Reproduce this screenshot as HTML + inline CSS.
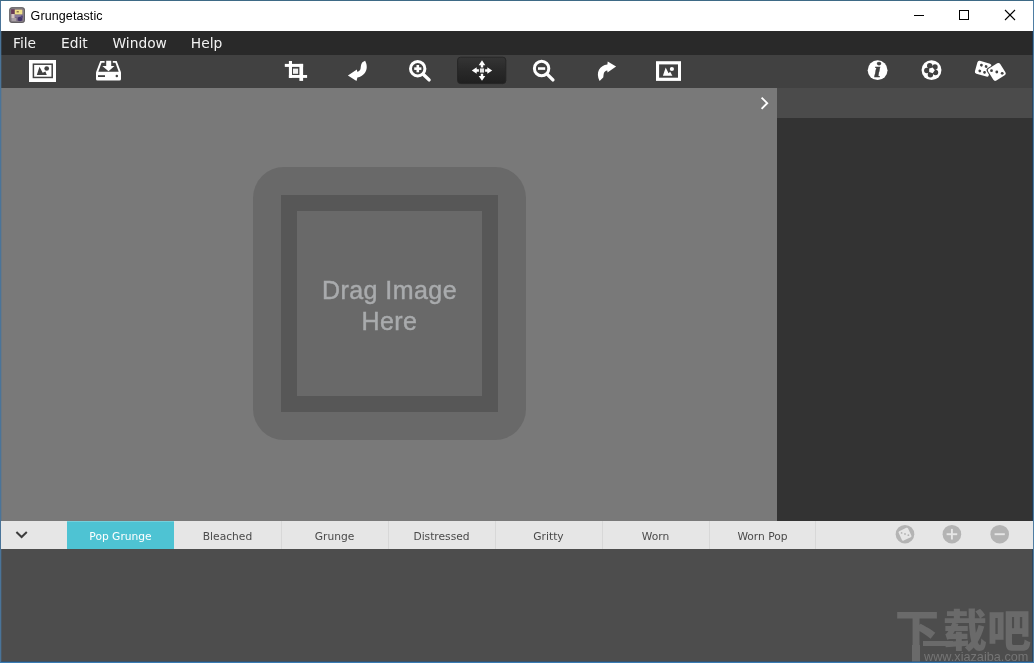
<!DOCTYPE html>
<html lang="en">
<head>
<meta charset="utf-8">
<title>Grungetastic</title>
<style>
html,body{margin:0;padding:0;}
body{width:1034px;height:663px;overflow:hidden;background:#3a7cb4;font-family:"Liberation Sans",sans-serif;position:relative;}
.abs{position:absolute;}
#win{will-change:transform;position:absolute;left:1px;top:1px;width:1032px;height:661px;background:#4d4d4d;overflow:hidden;}
/* coordinates inside #win are page coords minus 1 */
#titlebar{left:0;top:0;width:1032px;height:30px;background:#ffffff;}
#title{left:29.6px;top:7px;font-size:12.5px;line-height:16px;color:#000;letter-spacing:0.1px;white-space:nowrap;}
#menubar{left:0;top:30px;width:1032px;height:24px;background:#292929;}
.menu{top:3px;font-family:"DejaVu Sans","Liberation Sans",sans-serif;font-size:13.8px;line-height:18px;color:#f2f2f2;white-space:nowrap;}
#toolbar{left:0;top:54px;width:1032px;height:33px;background:#414141;}
#canvas{left:0;top:87px;width:776px;height:433px;background:#797979;}
#side{left:776px;top:87px;width:256px;height:433px;background:#333333;}
#sidehead{left:0;top:0;width:256px;height:30px;background:#4b4b4b;}
#strip{left:0;top:520px;width:1032px;height:28px;background:#e6e6e6;}
.tab{top:0;height:28px;width:107px;text-align:center;font-family:"DejaVu Sans","Liberation Sans",sans-serif;font-size:10.7px;line-height:32px;color:#4a4a4a;}
.sep{top:0;width:1px;height:28px;background:#d8d8d8;}
.tab.on{background:#4ec3d3;color:#ffffff;box-shadow:inset 0 1px 0 rgba(255,255,255,0.22);}
#bottom{left:0;top:548px;width:1032px;height:113px;background:#4d4d4d;}
#drop1{left:252.3px;top:79.2px;width:272.4px;height:272.4px;border-radius:31px;background:#696969;}
#drop2{left:27.4px;top:27.4px;width:217.5px;height:217px;background:#575757;}
#drop3{left:16.2px;top:16.1px;width:185.2px;height:185.2px;background:#696969;}
#droptext{left:0;top:64.5px;width:185.2px;text-align:center;font-size:25px;line-height:30.5px;color:#a9abad;letter-spacing:0.45px;-webkit-text-stroke:0.45px #a9abad;}
#wm{left:894px;top:60.5px;font-family:"Liberation Sans","Noto Sans CJK SC",sans-serif;font-weight:900;font-size:44px;line-height:44px;color:#6a6a6a;white-space:nowrap;letter-spacing:0px;}
#wmstem{left:911.2px;top:96px;width:7.4px;height:18px;background:#6a6a6a;}
#wmbar{left:922.4px;top:92px;width:30px;height:4.8px;background:#6a6a6a;}
#wmurl{left:923px;top:101.2px;font-size:12.7px;line-height:15px;color:#757575;white-space:nowrap;}
svg{position:absolute;left:0;top:0;overflow:visible;}
</style>
</head>
<body>
<div id="win">
  <div id="titlebar" class="abs">
    <div id="title" class="abs">Grungetastic</div>
  </div>
  <div id="menubar" class="abs">
    <div class="menu abs" style="left:12px">File</div>
    <div class="menu abs" style="left:60px">Edit</div>
    <div class="menu abs" style="left:111.5px">Window</div>
    <div class="menu abs" style="left:189.8px">Help</div>
  </div>
  <div id="toolbar" class="abs"></div>
  <div id="canvas" class="abs">
    <div id="drop1" class="abs"><div id="drop2" class="abs"><div id="drop3" class="abs">
      <div id="droptext" class="abs">Drag Image<br>Here</div>
    </div></div></div>
  </div>
  <div id="side" class="abs"><div id="sidehead" class="abs"></div></div>
  <div id="strip" class="abs">
    <div class="tab on abs" style="left:66px">Pop Grunge</div>
    <div class="tab abs" style="left:173px">Bleached</div>
    <div class="tab abs" style="left:280px">Grunge</div>
    <div class="tab abs" style="left:387px">Distressed</div>
    <div class="tab abs" style="left:494px">Gritty</div>
    <div class="tab abs" style="left:601px">Worn</div>
    <div class="tab abs" style="left:708px">Worn Pop</div>
    <div class="sep abs" style="left:280px"></div>
    <div class="sep abs" style="left:387px"></div>
    <div class="sep abs" style="left:494px"></div>
    <div class="sep abs" style="left:601px"></div>
    <div class="sep abs" style="left:708px"></div>
    <div class="sep abs" style="left:814px"></div>
  </div>
  <div id="bottom" class="abs">
    <div id="wm" class="abs"><span style="letter-spacing:4px">下</span>载吧</div>
    <div id="wmstem" class="abs"></div>
    <div id="wmbar" class="abs"></div>
    <div id="wmurl" class="abs">www.xiazaiba.com</div>
  </div>
</div>
<div class="abs" style="left:0;top:0;width:1034px;height:1px;background:#3e6a86"></div>
<div class="abs" style="left:0;top:1px;width:1px;height:662px;background:#4a7499"></div>
<div class="abs" style="left:1033px;top:1px;width:1px;height:662px;background:#4e7da3"></div>
<div class="abs" style="left:0;top:662px;width:1034px;height:1px;background:#3a7cb4"></div>
<div class="abs" style="left:1px;top:31px;width:1px;height:490px;background:rgba(74,116,153,0.3)"></div>
<div class="abs" style="left:1px;top:549px;width:1px;height:113px;background:rgba(74,116,153,0.3)"></div>
<div class="abs" style="left:1032px;top:31px;width:1px;height:490px;background:rgba(20,60,100,0.55)"></div>
<div class="abs" style="left:1032px;top:549px;width:1px;height:113px;background:rgba(20,60,100,0.55)"></div>
<div class="abs" style="left:1px;top:661px;width:1032px;height:1px;background:rgba(40,85,130,0.55)"></div>
<!-- ICONS: page coordinates -->
<svg id="icons" width="1034" height="663" viewBox="0 0 1034 663">
<!-- app icon -->
<defs><filter id="soft" x="-10%" y="-10%" width="120%" height="120%"><feGaussianBlur stdDeviation="0.55"/></filter></defs>
<g>
  <rect x="9.3" y="7.3" width="15.6" height="15.6" rx="2.6" fill="#8d888b"/>
  <rect x="9.8" y="7.8" width="14.6" height="14.6" rx="2.2" fill="none" stroke="#5f5c5f" stroke-width="1"/>
  <g filter="url(#soft)">
    <rect x="11" y="9" width="12.2" height="12.2" fill="#7a6a80"/>
    <rect x="11.2" y="9.4" width="3.6" height="4.6" fill="#6a3a55"/>
    <rect x="14.8" y="9.6" width="7.6" height="4.8" fill="#efe08a"/>
    <rect x="16.6" y="11.2" width="2.2" height="1.2" fill="#7a5a40"/>
    <rect x="11.4" y="14" width="3.2" height="4" fill="#d4c4c0"/>
    <rect x="11.4" y="18" width="5" height="3" fill="#a9a0a4"/>
    <rect x="15" y="15" width="7.5" height="2.2" fill="#8a7a9a"/>
    <circle cx="20" cy="19" r="2.3" fill="#42346a"/>
    <circle cx="21.8" cy="16.8" r="1.2" fill="#54467a"/>
  </g>
</g>
<!-- window controls -->
<g stroke="#000" stroke-width="1" fill="none" shape-rendering="crispEdges">
  <line x1="914" y1="15.5" x2="924" y2="15.5"/>
  <rect x="959.5" y="10.5" width="9" height="9"/>
</g>
<g stroke="#000" stroke-width="1.1" fill="none">
  <line x1="1005" y1="10" x2="1015" y2="20"/>
  <line x1="1015" y1="10" x2="1005" y2="20"/>
</g>
<!-- toolbar: open image -->
<g>
  <rect x="29" y="60" width="27" height="22" fill="#fff"/>
  <rect x="33.4" y="64.2" width="18.8" height="13.25" fill="none" stroke="#414141" stroke-width="1.5"/>
  <path d="M36.8 75 L39.5 66.7 L42.7 72.8 L45.4 71.6 L46.8 75 Z" fill="#414141"/>
  <circle cx="46.7" cy="68.5" r="2.35" fill="#414141"/>
</g>
<!-- toolbar: save -->
<g>
  <path d="M96 72.2 L100.3 61 L116.7 61 L121 72.2 L121 79 Q121 80.6 119.4 80.6 L97.6 80.6 Q96 80.6 96 79 Z" fill="#fff"/>
  <path d="M98.3 71.8 L101.6 62.7 L115.4 62.7 L118.7 71.8 Z" fill="#414141"/>
  <rect x="104.6" y="60.5" width="8.2" height="2.6" fill="#414141"/>
  <path d="M106.2 60.8 L111.2 60.8 L111.2 65.9 L114.5 65.9 L108.5 71.3 L102.3 65.9 L106.2 65.9 Z" fill="#fff"/>
  <rect x="98" y="75.2" width="7" height="1.8" fill="#414141"/>
  <circle cx="116.8" cy="76" r="1.25" fill="#414141"/>
</g>
<!-- toolbar: crop -->
<g fill="#fff">
  <rect x="288.9" y="61" width="3.1" height="16.9"/>
  <rect x="284.8" y="63.9" width="18.3" height="3"/>
  <rect x="299.4" y="63.9" width="3.7" height="17"/>
  <rect x="288.9" y="75" width="18.2" height="2.9"/>
  <rect x="293" y="68.6" width="5.1" height="5.2" fill="#f0f0f0"/>
</g>
<!-- toolbar: rotate left -->
<path d="M365.1 60.7 C367.5 65 367.3 70 364.6 73.2 C362.7 75.6 360.5 77 357.4 77.4 L356.5 80.9 L347.9 75.5 L356.9 69.6 L357.2 71.8 C359 71.5 360 70.5 360.5 69 C361 67 360.5 64.5 362.4 62.3 Z" fill="#fff"/>
<!-- toolbar: zoom in -->
<g fill="none" stroke="#fff">
  <circle cx="417.7" cy="68.7" r="7.2" stroke-width="3"/>
  <line x1="423.2" y1="74.2" x2="429.1" y2="79.9" stroke-width="3.4" stroke-linecap="round"/>
  <line x1="414.2" y1="68.65" x2="421.4" y2="68.65" stroke-width="2.6"/>
  <line x1="417.8" y1="65" x2="417.8" y2="72.3" stroke-width="2.6"/>
</g>
<!-- toolbar: move (active) -->
<defs>
  <linearGradient id="gbtn" x1="0" y1="0" x2="0" y2="1">
    <stop offset="0" stop-color="#353535"/><stop offset="0.5" stop-color="#292929"/><stop offset="1" stop-color="#202020"/>
  </linearGradient>
</defs>
<rect x="457.6" y="57.2" width="48.2" height="26.4" rx="3" fill="url(#gbtn)" stroke="#252525" stroke-width="0.9"/>
<g fill="#fff">
  <path d="M482 60.3 L485.3 65.2 L483.2 65.2 L483.2 67.4 L480.8 67.4 L480.8 65.2 L478.7 65.2 Z"/>
  <path d="M482 80.8 L485.3 75.9 L483.2 75.9 L483.2 73.7 L480.8 73.7 L480.8 75.9 L478.7 75.9 Z"/>
  <path d="M471.8 70.55 L476.7 67.25 L476.7 69.35 L478.9 69.35 L478.9 71.75 L476.7 71.75 L476.7 73.85 Z"/>
  <path d="M492.2 70.55 L487.3 67.25 L487.3 69.35 L485.1 69.35 L485.1 71.75 L487.3 71.75 L487.3 73.85 Z"/>
  <rect x="479.9" y="68.4" width="4.2" height="4.2" fill="#e6e6e6"/>
</g>
<!-- toolbar: zoom out -->
<g fill="none" stroke="#fff">
  <circle cx="541.6" cy="68.5" r="7.2" stroke-width="3"/>
  <line x1="547.1" y1="74.1" x2="552.9" y2="79.9" stroke-width="3.4" stroke-linecap="round"/>
  <line x1="538" y1="68.55" x2="545.2" y2="68.55" stroke-width="2.6"/>
</g>
<!-- toolbar: rotate right -->
<path d="M607.7 61.4 L616.1 66.6 L607.5 72.5 L607.3 70.5 C605.5 70.7 604.3 71.7 603.8 73.5 C603.3 75.5 603.5 77 603.2 77.5 L599.6 81.1 C597.5 77 597.3 73 599 69.8 C600.7 66.8 603.5 65 607.4 64.6 Z" fill="#fff"/>
<!-- toolbar: image small -->
<g>
  <rect x="656" y="61.2" width="25" height="19.7" fill="#fff"/>
  <rect x="659.1" y="64.4" width="18.9" height="13.3" fill="#414141"/>
  <path d="M662.9 75.7 L665.7 67.6 L668.6 73.2 L670.2 71.8 L672.4 75.7 Z" fill="#fff"/>
  <circle cx="671.9" cy="69" r="2.1" fill="#fff"/>
</g>
<!-- toolbar: info -->
<circle cx="877.6" cy="70.15" r="9.9" fill="#fff"/>
<text transform="translate(877.5 76.6) scale(1.4 1.06)" x="0" y="0" text-anchor="middle" font-family="'Liberation Serif',serif" font-weight="bold" font-style="italic" font-size="19" fill="#414141" stroke="#414141" stroke-width="0.3">i</text>
<!-- toolbar: aperture -->
<circle cx="931.5" cy="70.1" r="9.95" fill="#fff"/>
<g fill="#414141">
  <circle cx="929.7" cy="65.8" r="2.7"/>
  <circle cx="935.0" cy="67.0" r="2.7"/>
  <circle cx="935.5" cy="72.5" r="2.7"/>
  <circle cx="930.4" cy="74.7" r="2.7"/>
  <circle cx="926.8" cy="70.5" r="2.7"/>
  <circle cx="931.5" cy="70.1" r="4.2"/>
</g>
<polygon points="934.8,70.3 932.7,73.2 929.2,72.1 929.2,68.5 932.7,67.4" fill="#fff"/>
<!-- toolbar: dice -->
<g transform="translate(983.1 68.8) rotate(15.5)">
  <rect x="-7.2" y="-6.8" width="14.4" height="13.4" rx="2" fill="#fff"/>
  <circle cx="-2.6" cy="-3" r="1.4" fill="#414141"/>
  <circle cx="2.3" cy="-3" r="1.4" fill="#414141"/>
  <circle cx="-2.6" cy="3" r="1.4" fill="#414141"/>
  <circle cx="2.3" cy="3" r="1.4" fill="#414141"/>
</g>
<g transform="translate(996.8 71.95) rotate(-32)">
  <rect x="-8.1" y="-8.1" width="16.2" height="16.2" rx="2.6" fill="#414141"/>
  <rect x="-7.1" y="-7.1" width="14.2" height="14.2" rx="2.2" fill="#fff"/>
</g>
<circle cx="991.5" cy="70.7" r="1.4" fill="#414141"/>
<circle cx="996.8" cy="72" r="1.4" fill="#414141"/>
<circle cx="1002.2" cy="73.3" r="1.4" fill="#414141"/>
<!-- side collapse chevron -->
<polyline points="761.6,97.6 767.2,103.2 761.6,108.8" fill="none" stroke="#fff" stroke-width="1.9"/>
<!-- strip chevron -->
<polyline points="16.4,532 21.6,537 26.8,532" fill="none" stroke="#3c3c3c" stroke-width="2"/>
<!-- strip right icons -->
<circle cx="905" cy="534.2" r="9.3" fill="#b4b4b4"/>
<g transform="translate(905 534.2) rotate(-25)">
  <rect x="-5.2" y="-5.2" width="10.4" height="10.4" rx="1.3" fill="#e6e6e6"/>
</g>
<circle cx="901.6" cy="532.9" r="0.9" fill="#b4b4b4"/>
<circle cx="905" cy="534" r="0.9" fill="#b4b4b4"/>
<circle cx="908.4" cy="535.2" r="0.9" fill="#b4b4b4"/>
<circle cx="951.9" cy="534.2" r="9.3" fill="#b4b4b4"/>
<g stroke="#e6e6e6" stroke-width="1.9">
  <line x1="946.6" y1="534.2" x2="957.2" y2="534.2"/>
  <line x1="951.9" y1="528.9" x2="951.9" y2="539.5"/>
</g>
<circle cx="999.7" cy="534.2" r="9.3" fill="#b4b4b4"/>
<line x1="994.6" y1="534.2" x2="1004.8" y2="534.2" stroke="#e6e6e6" stroke-width="1.9"/>
</svg>
</body>
</html>
